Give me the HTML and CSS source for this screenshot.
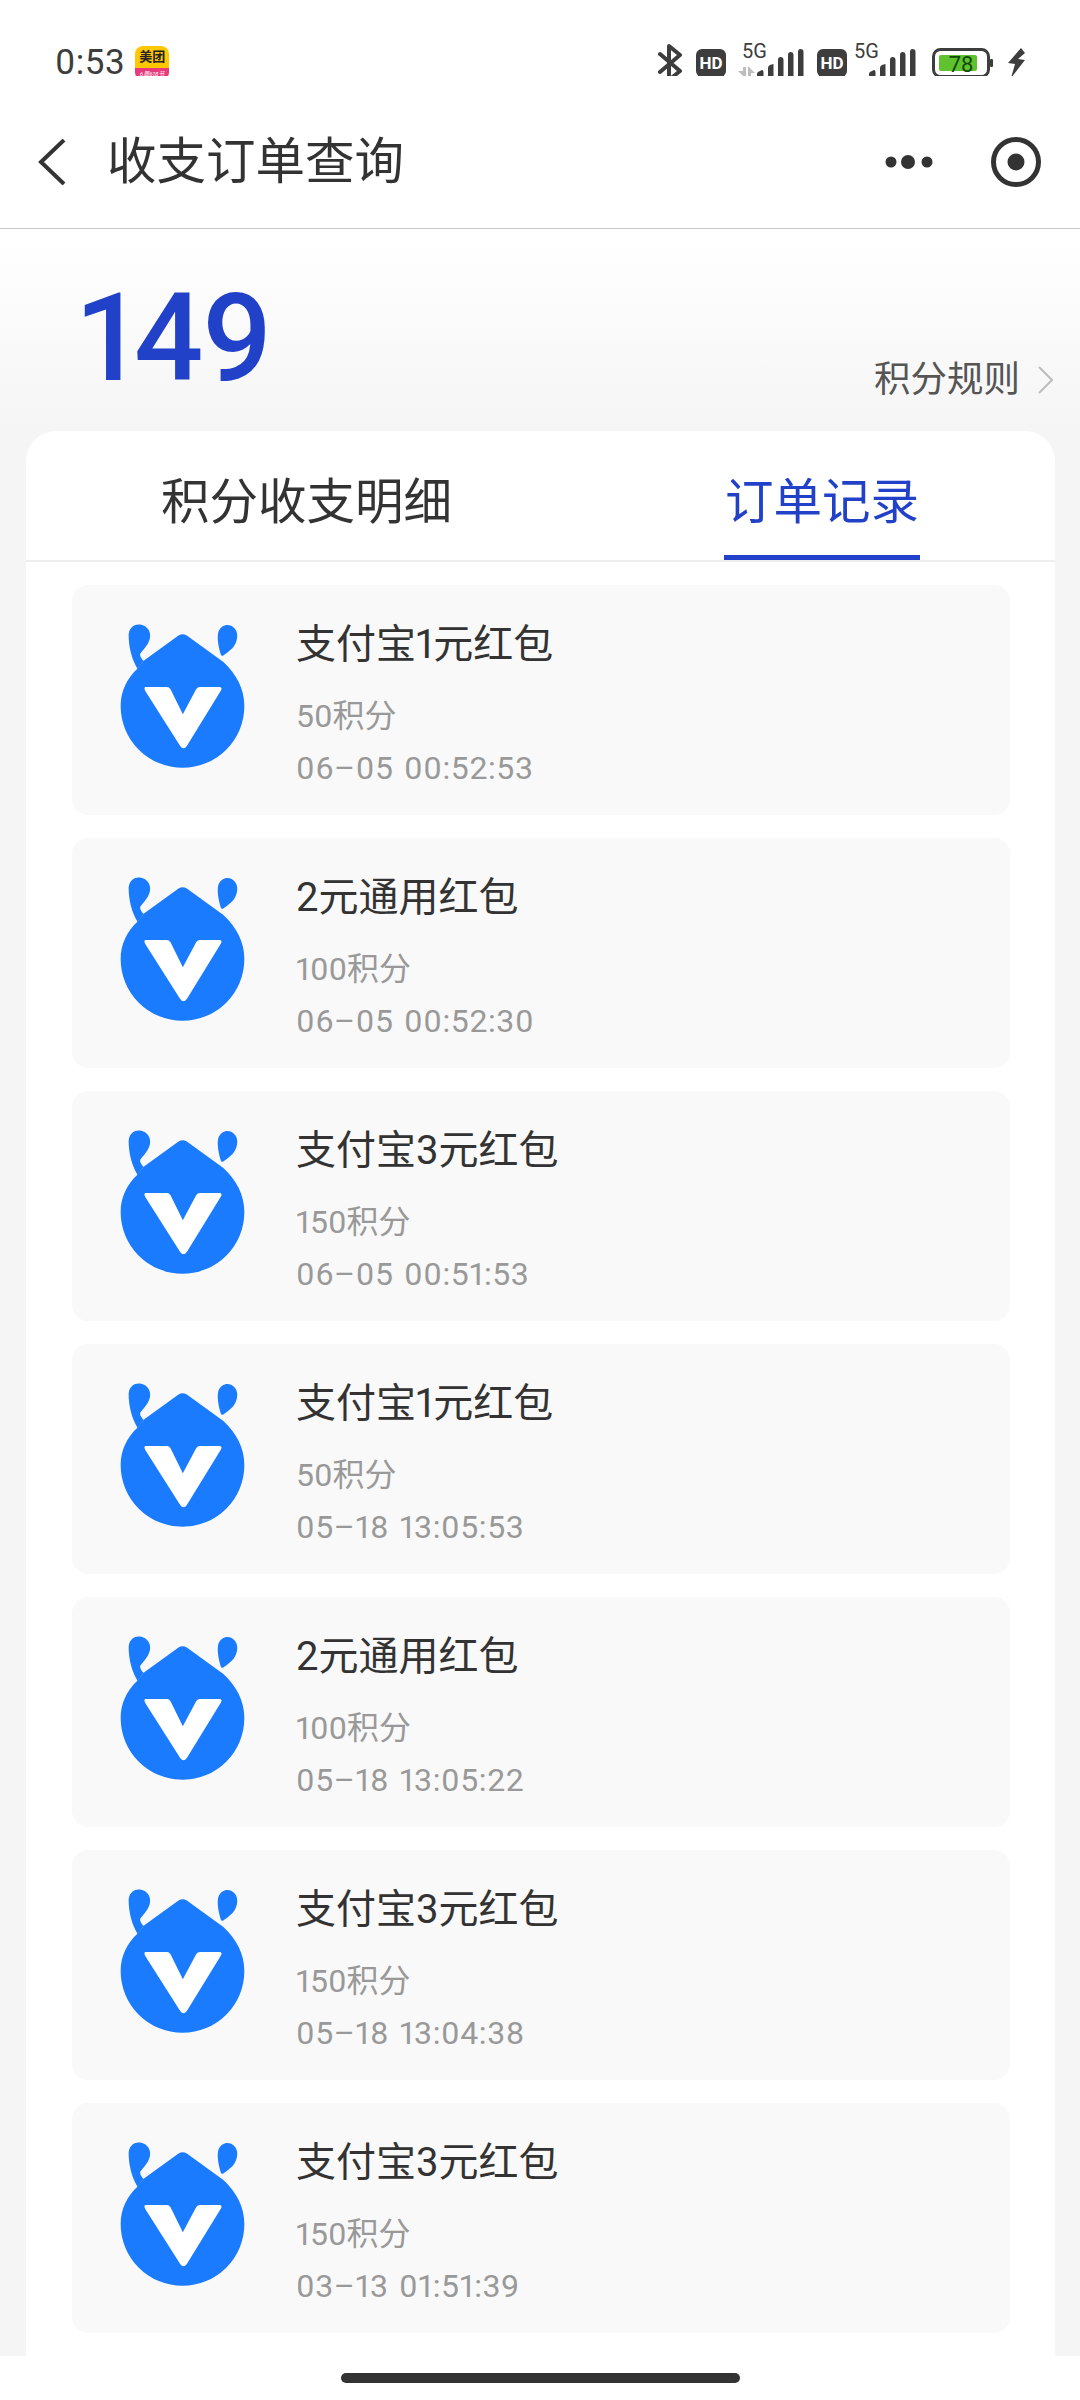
FILE: index.html
```html
<!DOCTYPE html>
<html lang="zh">
<head>
<meta charset="utf-8">
<title>收支订单查询</title>
<link rel="stylesheet" href="styles.css">
</head>
<body>
<svg class="defs" width="0" height="0" aria-hidden="true">
  <symbol id="logo" viewBox="170 90 400 450">
    <path fill="#1a7bff" d="M250 209L355 133Q367 125 380 133L490 213C530 250 553 295 553 345A186 186 0 0 1 181 345C181 300 200 262 232 232Z"/>
    <path fill="#1a7bff" d="M232 234C215 205 205 170 205 130C208 105 225 98 240 100C262 103 275 125 268 145C262 165 248 175 240 188C238 195 245 205 250 209Z"/>
    <path fill="#1a7bff" d="M482 190C475 165 470 140 475 122C482 102 505 95 520 108C538 122 533 150 520 168C510 180 495 190 490 193Q484 196 482 190Z"/>
    <path fill="#fff" d="M255 288L320 288Q327 288 331 295L368 370L408 295Q412 288 420 288L480 288Q487 290 483 298L380 465Q370 480 360 465L255 300Q250 290 255 288Z"/>
  </symbol>
  <symbol id="bars" viewBox="0 0 48 30">
    <path fill="#3d3d3d" d="M0 30V25Q0 24 1 23L5 21Q6.500 21 6.500 23V30ZM11 30V19Q11 17 13 16L16.500 15V30ZM21 30V11Q21 8 23.500 8Q26.500 8 26.500 11V30ZM31 30V6Q31 3 33.500 3Q36.500 3 36.500 6V30ZM41 30V3Q41 0 43.500 0Q46.500 0 46.500 3V30Z"/>
  </symbol>
</svg>

<header class="status">
  <div class="status-left">
    <span class="time">0:53</span>
    <div class="meituan">
      <span class="mt-top">美团</span>
      <span class="mt-bottom">6周618节</span>
    </div>
  </div>
  <div class="status-right">
    <svg class="ic-bt" viewBox="0 0 24 38"><path fill="none" stroke="#3d3d3d" stroke-width="4" stroke-linejoin="round" stroke-linecap="round" d="M2 10L22 27L11 36V2L22 11L2 28"/></svg>
    <svg class="ic-hd" viewBox="0 0 30 28"><rect width="30" height="28" rx="6" fill="#3d3d3d"/><text x="15" y="20" text-anchor="middle" class="hd-text">HD</text></svg>
    <svg class="ic-sig1" viewBox="0 0 66 40">
      <text x="4" y="14" class="five-g">5G</text>
      <path fill="#bdbdbd" d="M0 27H5V23H8V35L0 27ZM10 22L17 29H13V34H10Z"/>
      <use href="#bars" x="19" y="5" width="48" height="30"/>
    </svg>
    <svg class="ic-hd ic-hd2" viewBox="0 0 30 28"><rect width="30" height="28" rx="6" fill="#3d3d3d"/><text x="15" y="20" text-anchor="middle" class="hd-text">HD</text></svg>
    <svg class="ic-sig2" viewBox="0 0 62 40">
      <text x="0" y="14" class="five-g">5G</text>
      <use href="#bars" x="15" y="5" width="48" height="30"/>
    </svg>
    <svg class="ic-bat" viewBox="0 0 61 30">
      <rect x="1.500" y="1.500" width="55" height="27" rx="7" fill="none" stroke="#3d3d3d" stroke-width="3"/>
      <rect x="7" y="7" width="38" height="16" rx="2" fill="#5fc22e"/>
      <rect x="58" y="11" width="3" height="8" rx="1" fill="#3d3d3d"/>
      <text x="29" y="24" text-anchor="middle" class="bat-text">78</text>
    </svg>
    <svg class="ic-bolt" viewBox="0 0 17 30"><path fill="#3d3d3d" d="M13 0L0 15L7 16L3 30L17 12L10 11L17 5Z"/></svg>
  </div>
</header>

<nav class="nav">
  <svg class="back" viewBox="0 0 28 46"><path fill="none" stroke="#333" stroke-width="4" d="M26 1L3 23L26 45"/></svg>
  <h1 class="nav-title">收支订单查询</h1>
  <div class="capsule">
    <svg class="dots" viewBox="0 0 48 14"><circle cx="6" cy="7" r="5.500"/><circle cx="23" cy="7" r="7"/><circle cx="42" cy="7" r="5.500"/></svg>
    <svg class="target" viewBox="0 0 50 50"><circle cx="25" cy="25" r="22.500" fill="none" stroke-width="5"/><circle cx="25" cy="25" r="8.500" class="target-dot"/></svg>
  </div>
</nav>

<section class="summary">
  <div class="points">149</div>
  <div class="rules">
    <span>积分规则</span>
    <svg class="chev" viewBox="0 0 16 28"><path fill="none" stroke="#bbb" stroke-width="2" d="M1 1L14 14L1 27"/></svg>
  </div>
</section>

<main class="card">
  <div class="tabs">
    <div class="tab tab-one">积分收支明细</div>
    <div class="tab tab-two">订单记录</div>
  </div>
  <ul class="list">
    <li class="item"><svg class="logo"><use href="#logo"/></svg><div class="info"><div class="name">支付宝1元红包</div><div class="sub">50积分</div><div class="sub date">06–05 00:52:53</div></div></li>
    <li class="item"><svg class="logo"><use href="#logo"/></svg><div class="info"><div class="name">2元通用红包</div><div class="sub">100积分</div><div class="sub date">06–05 00:52:30</div></div></li>
    <li class="item"><svg class="logo"><use href="#logo"/></svg><div class="info"><div class="name">支付宝3元红包</div><div class="sub">150积分</div><div class="sub date">06–05 00:51:53</div></div></li>
    <li class="item"><svg class="logo"><use href="#logo"/></svg><div class="info"><div class="name">支付宝1元红包</div><div class="sub">50积分</div><div class="sub date">05–18 13:05:53</div></div></li>
    <li class="item"><svg class="logo"><use href="#logo"/></svg><div class="info"><div class="name">2元通用红包</div><div class="sub">100积分</div><div class="sub date">05–18 13:05:22</div></div></li>
    <li class="item"><svg class="logo"><use href="#logo"/></svg><div class="info"><div class="name">支付宝3元红包</div><div class="sub">150积分</div><div class="sub date">05–18 13:04:38</div></div></li>
    <li class="item"><svg class="logo"><use href="#logo"/></svg><div class="info"><div class="name">支付宝3元红包</div><div class="sub">150积分</div><div class="sub date">03–13 01:51:39</div></div></li>
  </ul>
</main>

<footer class="home"><div class="home-bar"></div></footer>
</body>
</html>
```
FILE: styles.css
```css
* { box-sizing: border-box; }
html, body { margin: 0; padding: 0; }
body {
  width: 1080px;
  height: 2400px;
  overflow: hidden;
  display: flex;
  flex-direction: column;
  background: #f5f5f5;
  font-family: Roboto, "Noto Sans CJK SC", sans-serif;
  font-variant-numeric: proportional-nums;
  color: #333;
}
.defs { position: absolute; }

.status {
  height: 76px;
  flex: none;
  background: #fff;
  display: flex;
  justify-content: space-between;
  align-items: flex-start;
  padding: 44px 55px 0 55px;
}
.status-left { display: flex; align-items: center; gap: 10px; }
.time { font-size: 35px; line-height: 38px; color: #3d3d3d; letter-spacing: 0.5px; }
.meituan {
  width: 34px;
  height: 34px;
  border-radius: 8px;
  overflow: hidden;
  display: flex;
  flex-direction: column;
  background: #ffc800;
}
.mt-top { flex: 1; font-size: 13px; line-height: 22px; font-weight: 700; color: #222; text-align: center; white-space: nowrap; }
.mt-bottom { height: 12px; font-size: 6px; line-height: 12px; font-style: italic; color: #fff; background: #e83a7c; text-align: center; white-space: nowrap; overflow: hidden; }
.status-right { display: flex; align-items: flex-start; }
.ic-bt { width: 24px; height: 38px; }
.ic-hd { width: 30px; height: 28px; margin: 5px 0 0 14px; }
.ic-hd2 { margin-left: 13px; }
.ic-sig1 { width: 66px; height: 40px; margin-left: 12px; overflow: visible; }
.ic-sig2 { width: 62px; height: 40px; margin-left: 7px; overflow: visible; }
.ic-bat { width: 61px; height: 30px; margin: 4px 0 0 16px; }
.ic-bolt { width: 17px; height: 30px; margin: 4px 0 0 15px; }
.hd-text { font: 700 17px Roboto, sans-serif; fill: #fff; }
.five-g { font: 400 20px Roboto, sans-serif; fill: #3d3d3d; }
.bat-text { font: 400 22px Roboto, sans-serif; fill: #0f4a05; }

.nav {
  height: 153px;
  flex: none;
  background: #fff;
  border-bottom: 1px solid #c9c9c9;
  display: flex;
  align-items: center;
  padding: 20px 0 0 38px;
}
.back { width: 28px; height: 46px; flex: none; }
.nav-title { margin: 0 0 0 41px; font-size: 49.500px; line-height: 60px; font-weight: 400; color: #333; flex: 1; }
.capsule { display: flex; align-items: center; gap: 58px; padding-right: 39px; }
.dots { width: 48px; height: 14px; fill: #333; }
.target { width: 50px; height: 50px; stroke: #333; }
.target-dot { fill: #333; stroke: none; }

.summary {
  height: 202px;
  flex: none;
  display: flex;
  justify-content: space-between;
  align-items: flex-start;
  padding: 46px 26px 0 79px;
  background: linear-gradient(#fff, #f5f5f5);
}
.points { font-size: 122px; line-height: 128px; font-weight: 500; color: #2141c8; letter-spacing: -1px; }
.rules { display: flex; align-items: center; gap: 18px; margin-top: 80px; font-size: 36.500px; line-height: 50px; color: #555; }
.chev { width: 16px; height: 28px; }

.card {
  flex: 1;
  min-height: 0;
  margin: 0 25px 0 26px;
  background: #fff;
  border-radius: 30px 30px 0 0;
  overflow: hidden;
}
.tabs {
  position: relative;
  height: 131px;
  border-bottom: 2px solid #eee;
}
.tab { position: absolute; top: 40px; font-size: 48.500px; line-height: 64px; white-space: nowrap; }
.tab-one { left: 135px; color: #333; }
.tab-two {
  left: 698px;
  top: 34px;
  height: 95px;
  width: 196px;
  padding-top: 6px;
  text-align: center;
  color: #2141c8;
  border-bottom: 5px solid #2141c8;
}
.list {
  list-style: none;
  margin: 0;
  padding: 23px 45px 0 46px;
  display: flex;
  flex-direction: column;
  gap: 23px;
}
.item {
  height: 230px;
  flex: none;
  display: flex;
  align-items: flex-start;
  background: #f9f9f9;
  border-radius: 16px;
  padding: 36px 0 0 45px;
}
.logo { width: 133px; height: 150px; flex: none; }
.info { margin: -2px 0 0 46px; display: flex; flex-direction: column; }
.name { font-size: 40px; line-height: 52px; color: #333; margin-bottom: 23px; }
.sub { font-size: 32px; line-height: 44px; color: #999; }
.date { margin-top: 8px; letter-spacing: 0.6px; word-spacing: 2px; }

.home {
  height: 44px;
  flex: none;
  background: #fff;
  display: flex;
  justify-content: center;
  padding-top: 17px;
}
.home-bar { width: 399px; height: 10px; border-radius: 5px; background: #333; }
```
